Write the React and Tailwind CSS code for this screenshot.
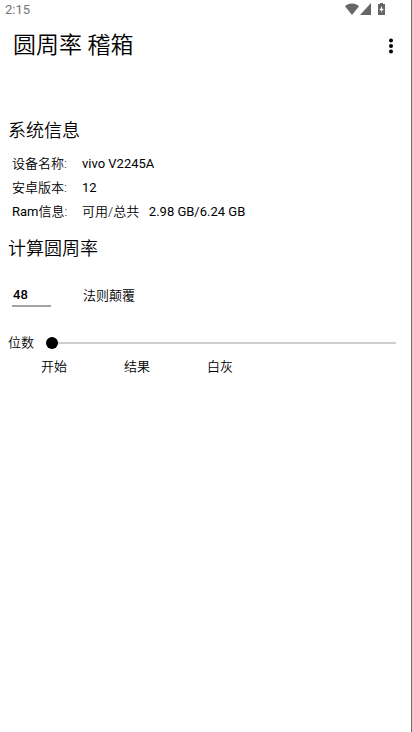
import { useState } from "react";

function StatusBar() {
  return (
    <div className="flex h-5 items-center justify-between pl-[5px] pr-[26px] text-[#757575]">
      <span className="text-[13px] leading-5 font-normal">2:15</span>
      <div className="flex h-5 items-start pt-[3px]" aria-hidden="true">
        <svg width="14" height="12" viewBox="0 0 14 12" fill="#666">
          <path d="M7 12 0 3.2C1.8 1.4 4.2.4 7 .4s5.2 1 7 2.8Z" />
        </svg>
        <svg className="ml-px" width="11" height="12" viewBox="0 0 11 12" fill="#666">
          <path d="M11 0v12H0Z" />
        </svg>
        <svg className="ml-[7px]" width="7" height="12" viewBox="0 0 7 12" fill="#666">
          <path d="M2 0h3v1h2v11H0V1h2Z" />
          <path d="M3.5 3 4.3 5.7 6 6.5 4.3 7.3 3.5 9.5 2.7 7.3 1 6.5 2.7 5.7Z" fill="#fff" />
        </svg>
      </div>
    </div>
  );
}

function InfoRow({ label, children }) {
  return (
    <div className="flex">
      <dt className="w-[70px] shrink-0">{label}</dt>
      <dd className="whitespace-pre font-normal">{children}</dd>
    </div>
  );
}

export default function App() {
  const [digits, setDigits] = useState("48");
  const [level, setLevel] = useState(0);

  return (
    <div className="min-h-screen border-r border-[#6f6f6f] bg-white font-[Roboto,'Noto_Sans_CJK_SC',sans-serif] text-[13px] leading-6 font-[350] text-black">
      <StatusBar />
      <header className="flex h-[52px] items-center justify-between pl-[13px] pr-2.5">
        <h1 className="text-[23px] leading-8">圆周率 稽箱</h1>
        <button type="button" aria-label="更多" className="flex h-8 w-5 items-center justify-center">
          <svg width="4" height="16" viewBox="0 0 4 16">
            <circle cx="2" cy="2.5" r="2" />
            <circle cx="2" cy="8" r="2" />
            <circle cx="2" cy="13.5" r="2" />
          </svg>
        </button>
      </header>

      <main className="pt-[45px]">
        <h2 className="px-2 text-lg leading-7">系统信息</h2>
        <dl className="mt-[7px] px-3">
          <InfoRow label="设备名称:">vivo V2245A</InfoRow>
          <InfoRow label="安卓版本:">12</InfoRow>
          <InfoRow label={<><span className="font-normal">Ram</span>信息:</>}>
            <span className="font-[350]">可用/总共</span>
            {"   2.98 GB/6.24 GB"}
          </InfoRow>
        </dl>

        <h2 className="mt-[11px] px-2 text-lg leading-7">计算圆周率</h2>
        <div className="mt-[21px] flex items-center px-3">
          <input
            aria-label="计算位数"
            value={digits}
            onChange={(e) => setDigits(e.target.value)}
            className="h-[22px] w-[39px] border-b-2 border-[#9da3a6] pl-px font-medium outline-none"
          />
          <button type="button" className="ml-8">法则颠覆</button>
        </div>

        <div className="mt-[23px] flex items-center pl-2 pr-[15px]">
          <label htmlFor="digits-range" className="w-[38px] shrink-0">位数</label>
          <input
            id="digits-range"
            type="range"
            min="0"
            max="100"
            value={level}
            onChange={(e) => setLevel(Number(e.target.value))}
            className="h-3 min-w-0 flex-1 appearance-none bg-transparent outline-none [&::-webkit-slider-runnable-track]:h-0.5 [&::-webkit-slider-runnable-track]:bg-[#cecece] [&::-webkit-slider-thumb]:-mt-[5px] [&::-webkit-slider-thumb]:size-3 [&::-webkit-slider-thumb]:appearance-none [&::-webkit-slider-thumb]:rounded-full [&::-webkit-slider-thumb]:bg-black"
          />
        </div>
        <div className="flex gap-[57px] pl-[41px]">
          <button type="button">开始</button>
          <button type="button">结果</button>
          <button type="button">白灰</button>
        </div>
      </main>
    </div>
  );
}
